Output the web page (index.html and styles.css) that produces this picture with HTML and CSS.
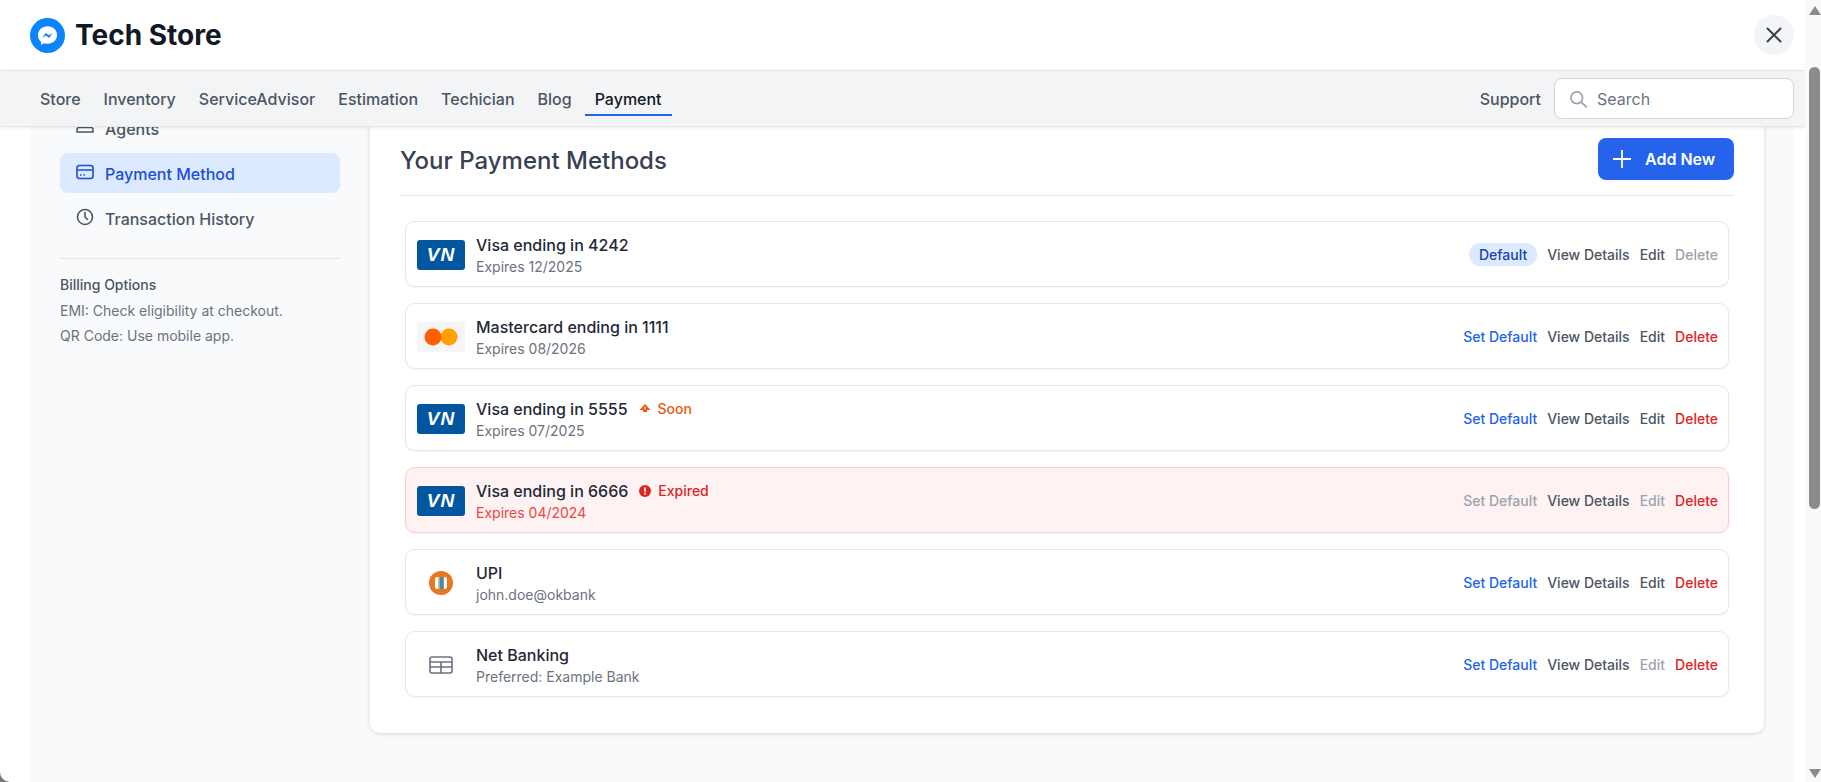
FILE: index.html
```html
<!DOCTYPE html>
<html lang="en">
<head>
    <meta charset="UTF-8">
    <meta name="viewport" content="width=device-width, initial-scale=1.0">
    <title>Tech Store - Payment</title>
    <link rel="stylesheet" href="styles.css">
</head>
<body>
<div class="page">
    <div class="modal">
        <header class="topbar">
            <div class="brand">
                <svg class="brand-logo" viewBox="0 0 36 36">
                    <circle cx="18" cy="18" r="18" fill="#0a84ff"/>
                    <path d="M18 8.500c-5.600 0-9.800 4-9.800 9.200 0 2.800 1.200 5.100 3.100 6.700v3.300l3-1.700c1.100.3 2.400.5 3.700.5 5.600 0 9.800-4 9.800-9 0-5-4.200-9-9.800-9z" fill="#fff"/>
                    <path d="M12.500 20.500l3.700-5.200 3.200 2.400 3.900-2.400-3.700 5.200-3.200-2.400z" fill="#0a84ff"/>
                </svg>
                <span class="brand-name">Tech Store</span>
            </div>
            <button class="close-btn">
                <svg viewBox="0 0 24 24" width="24" height="24" fill="none" stroke="#374151" stroke-width="2" stroke-linecap="round"><path d="M5.500 5.500l13 13M18.500 5.500l-13 13"/></svg>
            </button>
        </header>

        <nav class="navbar">
            <div class="nav-links">
                <a class="nav-link">Store</a>
                <a class="nav-link">Inventory</a>
                <a class="nav-link">ServiceAdvisor</a>
                <a class="nav-link">Estimation</a>
                <a class="nav-link">Techician</a>
                <a class="nav-link">Blog</a>
                <a class="nav-link active">Payment</a>
            </div>
            <div class="nav-right">
                <a class="support">Support</a>
                <div class="search">
                    <svg viewBox="0 0 24 24" width="20" height="20" fill="none" stroke="#9ca3af" stroke-width="2" stroke-linecap="round"><circle cx="10.500" cy="10.500" r="7"/><path d="M16 16l6 5.500"/></svg>
                    <span>Search</span>
                </div>
            </div>
        </nav>

        <main class="content">
            <aside class="sidebar">
                <a class="side-item">
                    <svg viewBox="0 0 20 20" width="20" height="20" fill="none" stroke="currentColor" stroke-width="1.500"><circle cx="6" cy="7" r="2"/><circle cx="14" cy="7" r="2"/><path d="M2 15v-2.500c0-1 1-2 2-2h12c1 0 2 1 2 2V15zM7.500 4.500h5"/></svg>
                    <span class="side-label">Agents</span>
                </a>
                <a class="side-item active">
                    <svg viewBox="0 0 20 20" width="20" height="20" fill="none" stroke="currentColor" stroke-width="1.600"><rect x="2" y="3.500" width="16" height="13" rx="2.500"/><path d="M2 8h16M5 13h1.500M8.500 13H10"/></svg>
                    <span class="side-label">Payment Method</span>
                </a>
                <a class="side-item">
                    <svg viewBox="0 0 20 20" width="20" height="20" fill="none" stroke="currentColor" stroke-width="1.600" stroke-linecap="round"><circle cx="10" cy="10" r="7.500"/><path d="M10 5.500V10l2.500 2.500"/></svg>
                    <span class="side-label">Transaction History</span>
                </a>
                <div class="billing">
                    <h4>Billing Options</h4>
                    <p>EMI: Check eligibility at checkout.</p>
                    <p>QR Code: Use mobile app.</p>
                </div>
            </aside>

            <section class="card">
                <div class="card-head">
                    <h2>Your Payment Methods</h2>
                    <button class="add-btn">
                        <svg viewBox="0 0 20 20" width="20" height="20" fill="none" stroke="#fff" stroke-width="1.800"><path d="M10 1v18M1 10h18"/></svg>
                        Add New
                    </button>
                </div>

                <div class="methods">
                    <div class="method">
                        <div class="logo visa">VN</div>
                        <div class="info">
                            <div class="title-row"><span class="name">Visa ending in 4242</span></div>
                            <div class="sub">Expires 12/2025</div>
                        </div>
                        <div class="actions">
                            <span class="badge">Default</span>
                            <a class="act">View Details</a>
                            <a class="act">Edit</a>
                            <a class="act off">Delete</a>
                        </div>
                    </div>

                    <div class="method">
                        <div class="logo mc">
                            <svg viewBox="0 0 48 30" width="48" height="30"><circle cx="32" cy="15" r="8.500" fill="#ffa000"/><circle cx="16" cy="15" r="8.500" fill="#ff5f00"/></svg>
                        </div>
                        <div class="info">
                            <div class="title-row"><span class="name">Mastercard ending in 1111</span></div>
                            <div class="sub">Expires 08/2026</div>
                        </div>
                        <div class="actions">
                            <a class="act blue">Set Default</a>
                            <a class="act">View Details</a>
                            <a class="act">Edit</a>
                            <a class="act red">Delete</a>
                        </div>
                    </div>

                    <div class="method">
                        <div class="logo visa">VN</div>
                        <div class="info">
                            <div class="title-row">
                                <span class="name">Visa ending in 5555</span>
                                <span class="flag soon">
                                    <svg viewBox="0 0 12 12" width="12" height="12"><path d="M6 1l5.500 6H8v2H4V7H.5z" fill="#ea580c"/><path d="M5.500 4h1v2.500h-1z" fill="#fff"/></svg>
                                    Soon
                                </span>
                            </div>
                            <div class="sub">Expires 07/2025</div>
                        </div>
                        <div class="actions">
                            <a class="act blue">Set Default</a>
                            <a class="act">View Details</a>
                            <a class="act">Edit</a>
                            <a class="act red">Delete</a>
                        </div>
                    </div>

                    <div class="method expired">
                        <div class="logo visa">VN</div>
                        <div class="info">
                            <div class="title-row">
                                <span class="name">Visa ending in 6666</span>
                                <span class="flag late">
                                    <svg viewBox="0 0 12 12" width="12" height="12"><circle cx="6" cy="6" r="6" fill="#dc2626"/><path d="M5.200 2.500h1.600v4.200H5.200zM5.200 7.800h1.600v1.600H5.200z" fill="#fff"/></svg>
                                    Expired
                                </span>
                            </div>
                            <div class="sub">Expires 04/2024</div>
                        </div>
                        <div class="actions">
                            <a class="act off">Set Default</a>
                            <a class="act">View Details</a>
                            <a class="act off">Edit</a>
                            <a class="act red">Delete</a>
                        </div>
                    </div>

                    <div class="method">
                        <div class="logo">
                            <svg viewBox="0 0 24 24" width="24" height="24"><circle cx="12" cy="12" r="12" fill="#e87722"/><rect x="6" y="6" width="12" height="12" rx="2" fill="#fff"/><rect x="10.500" y="6" width="3.500" height="12" fill="#1d9ad6"/><rect x="9.500" y="6" width="1" height="12" fill="#e87722"/><rect x="14" y="6" width="1" height="12" fill="#e87722"/></svg>
                        </div>
                        <div class="info">
                            <div class="title-row"><span class="name">UPI</span></div>
                            <div class="sub">john.doe@okbank</div>
                        </div>
                        <div class="actions">
                            <a class="act blue">Set Default</a>
                            <a class="act">View Details</a>
                            <a class="act">Edit</a>
                            <a class="act red">Delete</a>
                        </div>
                    </div>

                    <div class="method">
                        <div class="logo">
                            <svg viewBox="0 0 24 18" width="24" height="18" fill="none" stroke="#6b7280" stroke-width="1.600"><rect x="1" y="1" width="22" height="16" rx="2"/><path d="M1 6h22M1 11h22M12 6v11"/></svg>
                        </div>
                        <div class="info">
                            <div class="title-row"><span class="name">Net Banking</span></div>
                            <div class="sub">Preferred: Example Bank</div>
                        </div>
                        <div class="actions">
                            <a class="act blue">Set Default</a>
                            <a class="act">View Details</a>
                            <a class="act off">Edit</a>
                            <a class="act red">Delete</a>
                        </div>
                    </div>
                </div>
            </section>
        </main>
    </div>

    <div class="scrollbar">
        <div class="arrow-up"></div>
        <div class="thumb"></div>
        <div class="arrow-down"></div>
    </div>
</div>
</body>
</html>
```

FILE: styles.css
```css
* {
    box-sizing: border-box;
}
html, body {
    height: 100%;
    margin: 0;
    overflow: hidden;
    font-family: Inter, "Noto Sans", Arial, sans-serif;
}
body {
    background: #777;
}
a {
    cursor: pointer;
}
.page {
    display: flex;
    height: 782px;
}
.modal {
    flex: 1;
    display: flex;
    flex-direction: column;
    min-width: 0;
    background: #fff;
    border-bottom-left-radius: 10px;
    overflow: hidden;
}

/* top */
.topbar {
    height: 70px;
    display: flex;
    align-items: center;
    justify-content: space-between;
    padding: 0 11px 0 30px;
}
.brand {
    display: flex;
    align-items: center;
    gap: 10px;
}
.brand-logo {
    width: 35px;
    height: 35px;
}
.brand-name {
    font-size: 28px;
    font-weight: 700;
    color: #111827;
}
.close-btn {
    width: 40px;
    height: 40px;
    border: 0;
    padding: 0;
    border-radius: 50%;
    background: #f3f4f6;
    display: flex;
    align-items: center;
    justify-content: center;
}

.navbar {
    position: relative;
    z-index: 2;
    height: 57px;
    display: flex;
    align-items: center;
    justify-content: space-between;
    padding: 0 11px 0 30px;
    background: #f3f4f6;
    border-top: 1px solid #e5e7eb;
    border-bottom: 1px solid #e5e7eb;
    box-shadow: 0 1px 3px rgba(0, 0, 0, 0.08);
}
.nav-links {
    display: flex;
    gap: 3px;
}
.nav-link {
    padding: 5px 10px 3px;
    font-size: 16px;
    line-height: 24px;
    font-weight: 500;
    color: #4b5563;
    border-bottom: 2px solid transparent;
}
.nav-link.active {
    color: #111827;
    border-bottom-color: #2563eb;
}
.nav-right {
    display: flex;
    align-items: center;
    gap: 13px;
}
.support {
    font-size: 16px;
    font-weight: 500;
    color: #4b5563;
}
.search {
    width: 240px;
    height: 41px;
    display: flex;
    align-items: center;
    gap: 9px;
    padding-left: 13px;
    background: #fff;
    border: 1px solid #d1d5db;
    border-radius: 8px;
    font-size: 16px;
    color: #6b7280;
}

/* main area */
.content {
    flex: 1;
    display: flex;
    margin: 0 11px 0 30px;
    min-height: 0;
    background: #f9fafb;
    overflow: hidden;
}
.sidebar {
    width: 340px;
    flex-shrink: 0;
    margin-top: -19px;
    padding: 0 30px;
    display: flex;
    flex-direction: column;
    gap: 5px;
}
.side-item {
    height: 40px;
    display: flex;
    align-items: center;
    gap: 10px;
    padding-left: 15px;
    border-radius: 8px;
    font-size: 16px;
    font-weight: 500;
    color: #4b5563;
}
.side-label {
    padding-top: 2px;
}
.side-item svg {
    margin-top: -2px;
}
.side-item.active {
    background: #dbeafe;
    color: #1d4ed8;
}
.billing {
    margin-top: 15px;
    padding-top: 15px;
    border-top: 1px solid #e5e7eb;
    font-size: 14px;
    color: #6b7280;
}
.billing h4 {
    margin: 0 0 2px;
    font-size: 14px;
    line-height: 22px;
    font-weight: 500;
    color: #4b5563;
}
.billing p {
    margin: 0;
    line-height: 25px;
}

.card {
    flex: 1;
    margin: -20px 30px 0 0;
    padding: 31px 30px 0;
    height: 626px;
    background: #fff;
    border-radius: 10px;
    box-shadow: 0 1px 4px rgba(0, 0, 0, 0.14);
}
.card-head {
    display: flex;
    align-items: center;
    justify-content: space-between;
    padding-bottom: 15px;
    border-bottom: 1px solid #e5e7eb;
}
.card-head h2 {
    margin: 0;
    padding-top: 2px;
    font-size: 24px;
    font-weight: 500;
    color: #374151;
}
.add-btn {
    width: 136px;
    height: 42px;
    display: flex;
    align-items: center;
    gap: 13px;
    padding: 0 0 0 14px;
    border: 0;
    border-radius: 8px;
    background: #2563eb;
    color: #fff;
    font-family: inherit;
    font-size: 16px;
    font-weight: 600;
}
.methods {
    display: flex;
    flex-direction: column;
    gap: 16px;
    padding: 25px 5px 0;
}
.method {
    height: 66px;
    display: flex;
    align-items: center;
    padding: 0 10px 0 11px;
    background: #fff;
    border: 1px solid #e5e7eb;
    border-radius: 10px;
    box-shadow: 0 1px 2px rgba(0, 0, 0, 0.05);
}
.method.expired {
    background: #fef2f2;
    border-color: #fecaca;
}
.logo {
    width: 48px;
    height: 30px;
    flex-shrink: 0;
    margin-top: 2px;
    display: flex;
    align-items: center;
    justify-content: center;
    border-radius: 3px;
}
.logo.visa {
    background: #00579f;
    color: #fff;
    font-family: "Liberation Sans", Arial, sans-serif;
    font-size: 19px;
    font-weight: 700;
    font-style: italic;
    letter-spacing: 1px;
}
.logo.mc {
    background: #f5f5f5;
}
.info {
    margin-left: 11px;
    padding-top: 2px;
}
.title-row {
    display: flex;
    align-items: center;
    height: 22px;
}
.name {
    font-size: 16px;
    font-weight: 500;
    color: #1f2937;
}
.sub {
    margin-top: 1px;
    font-size: 14px;
    line-height: 20px;
    color: #6b7280;
}
.expired .sub {
    color: #ef4444;
}
.flag {
    display: flex;
    align-items: center;
    gap: 7px;
    margin-left: 11px;
    font-size: 14px;
    font-weight: 500;
}
.flag.soon {
    color: #ea580c;
}
.flag.late {
    color: #dc2626;
}
.actions {
    margin-left: auto;
    display: flex;
    align-items: center;
    gap: 10px;
    font-size: 14px;
    font-weight: 500;
}
.act {
    color: #4b5563;
}
.act.blue {
    color: #2563eb;
}
.act.red {
    color: #dc2626;
}
.act.off {
    color: #9ca3af;
}
.badge {
    padding: 3px 10px;
    border-radius: 999px;
    background: #dbeafe;
    color: #1e40af;
}

/* fake window scrollbar */
.scrollbar {
    width: 16px;
    flex-shrink: 0;
    display: flex;
    flex-direction: column;
    align-items: center;
    padding-left: 3px;
    background: #fafafa;
}
.arrow-up, .arrow-down {
    width: 0;
    height: 0;
    border-left: 6.5px solid transparent;
    border-right: 6.5px solid transparent;
}
.arrow-up {
    margin-top: 6px;
    border-bottom: 9px solid #8b8b8b;
}
.thumb {
    width: 11px;
    height: 442px;
    margin-top: 52px;
    border-radius: 6px;
    background: #8b8b8b;
}
.arrow-down {
    margin-top: auto;
    margin-bottom: 4px;
    border-top: 9px solid #8b8b8b;
}
```
